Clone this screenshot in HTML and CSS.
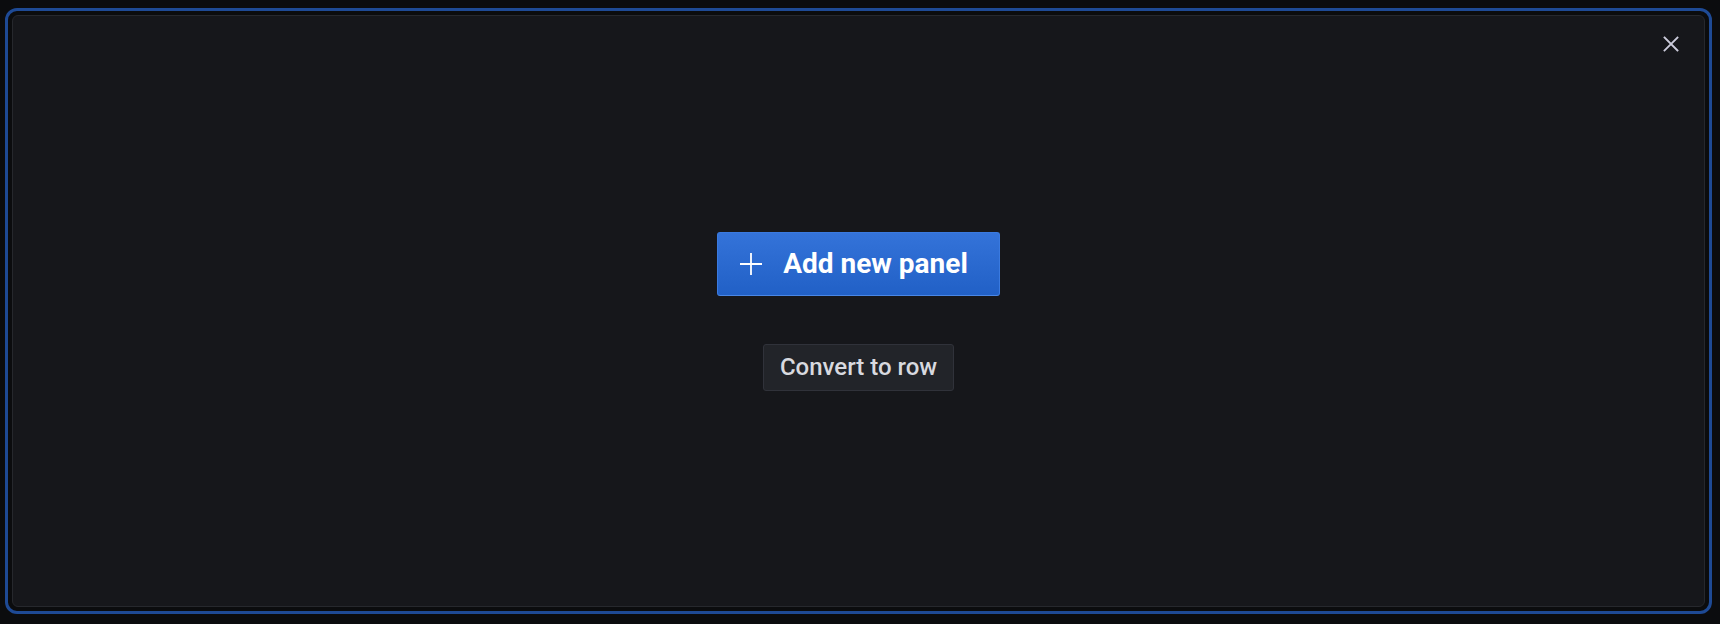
FILE: index.html
```html
<!DOCTYPE html>
<html lang="en">
<head>
    <meta charset="UTF-8">
    <title>Add panel</title>
    <link rel="stylesheet" href="styles.css">
</head>
<body>

    <!-- Selected panel frame -->
    <div class="frame">
        <div class="panel">
            <button class="close" type="button" aria-label="Remove">
                <svg width="16" height="16" viewBox="0 0 16 16">
                    <path d="M1.5 1.5 L14.5 14.5 M14.5 1.5 L1.5 14.5" stroke="#ccccdc" stroke-width="1.8" stroke-linecap="square"/>
                </svg>
            </button>

            <div class="actions">
                <button class="btn-primary" type="button">
                    <svg width="22" height="22" viewBox="0 0 22 22">
                        <path d="M11 0 V22 M0 11 H22" stroke="#ffffff" stroke-width="1.8"/>
                    </svg>
                    <span>Add new panel</span>
                </button>
                <button class="btn-secondary" type="button">Convert to row</button>
            </div>
        </div>
    </div>

</body>
</html>
```

FILE: styles.css
```css
body {
    margin: 0;
    padding: 8px 0 0 5px;
    background-color: #0b0c0e;
    font-family: Roboto, "Liberation Sans", sans-serif;
}
.frame {
    width: 1693px;
    height: 592px;
    border: 3px solid #1e4a95;
    border-radius: 12px;
    padding: 4px;
}
.panel {
    position: relative;
    height: 100%;
    box-sizing: border-box;
    background-color: #16171b;
    border: 1px solid #26282d;
    border-radius: 6px;
    display: flex;
    align-items: center;
    justify-content: center;
}
.close {
    position: absolute;
    top: 20px;
    right: 25px;
    background: none;
    border: none;
    padding: 0;
    width: 16px;
    height: 16px;
    cursor: pointer;
}
.close svg {
    display: block;
}
.actions {
    display: flex;
    flex-direction: column;
    align-items: center;
    gap: 48px;
}
.btn-primary {
    display: flex;
    align-items: center;
    gap: 21px;
    height: 64px;
    padding: 0 31px 0 22px;
    background: linear-gradient(#3473d9, #2160c6);
    border: 1px solid #3a7ae0;
    border-bottom-color: #4a87e6;
    border-radius: 3px;
    color: #ffffff;
    font-family: Roboto, "Liberation Sans", sans-serif;
    font-size: 28px;
    font-weight: 700;
    cursor: pointer;
}
.btn-primary svg {
    display: block;
}
.btn-secondary {
    height: 47px;
    padding: 0 16px;
    background-color: #222429;
    border: 1px solid #30323a;
    border-radius: 3px;
    color: #d8d9df;
    font-family: Roboto, "Liberation Sans", sans-serif;
    font-size: 24px;
    font-weight: 500;
    cursor: pointer;
}
```
